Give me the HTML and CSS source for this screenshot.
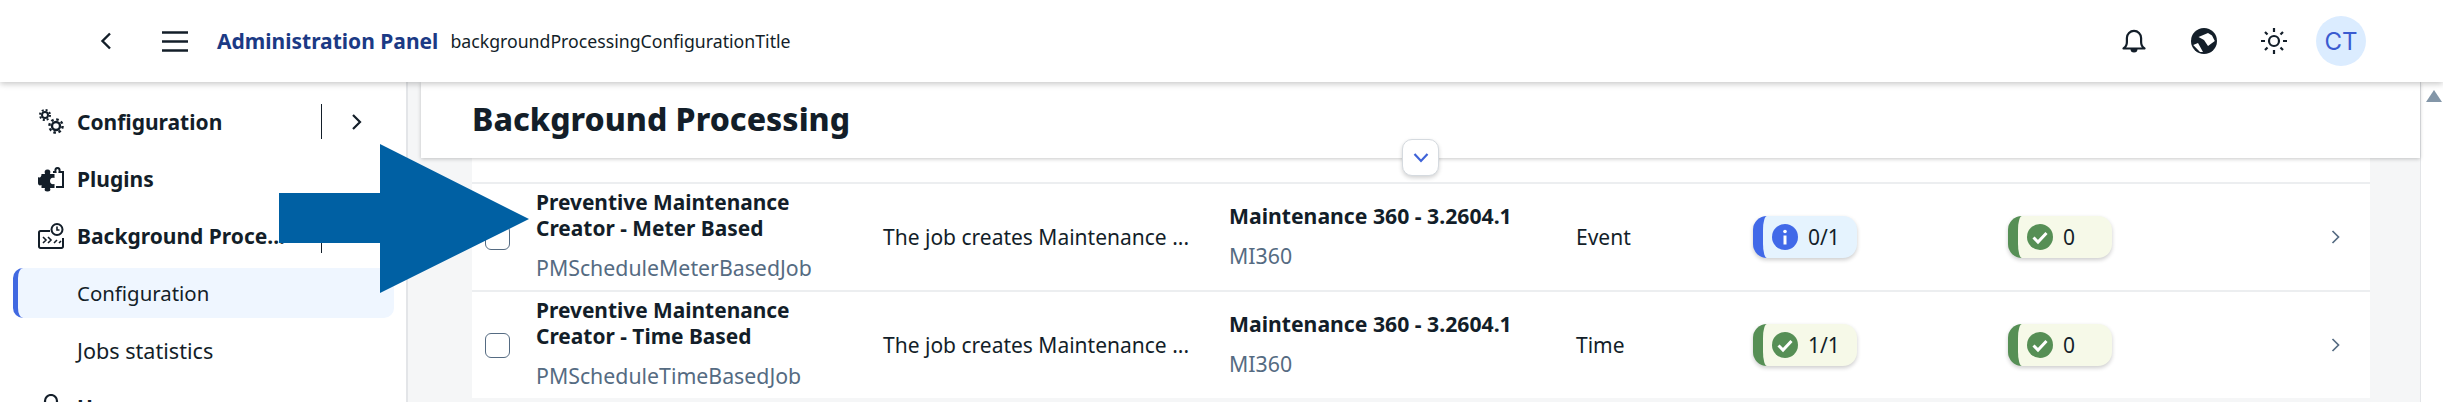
FILE: index.html
```html
<!DOCTYPE html>
<html lang="en">
<head>
    <meta charset="UTF-8">
    <meta name="viewport" content="width=device-width, initial-scale=1.0">
    <title>Administration Panel - Background Processing</title>
    <link rel="stylesheet" href="styles.css">
</head>
<body>

    <!-- Top bar -->
    <header class="topbar">
        <svg class="back-icon" width="12" height="18" viewBox="0 0 12 18"><path d="M10 1.500 2.500 9l7.500 7.500" fill="none" stroke="#131e29" stroke-width="2.400"/></svg>
        <svg class="menu-icon" width="26" height="21" viewBox="0 0 26 21"><path d="M0 1.500h26M0 10.500h26M0 19.500h26" stroke="#131e29" stroke-width="2.600"/></svg>
        <span class="app-title">Administration Panel</span>
        <span class="app-subtitle">backgroundProcessingConfigurationTitle</span>
        <div class="topbar-actions">
            <svg class="bell-icon" width="24" height="24" viewBox="0 0 24 24"><path d="M1.500 19.500c2.500-1.600 3.400-3.400 3.400-6.500V9a7.100 7.100 0 0 1 14.200 0v4c0 3.100.9 4.900 3.400 6.500z" fill="none" stroke="#131e29" stroke-width="2.200" stroke-linejoin="round"/><path d="M8.500 20h7a3.500 3.500 0 0 1-7 0z" fill="#131e29"/></svg>
            <svg class="globe-icon" width="26" height="26" viewBox="0 0 26 26"><circle cx="13" cy="13" r="13" fill="#131e29"/><path d="M7.500 9 17 5l4 2.500 2.800 5.500-6.800 5-4-6zM2.200 17l4.800-2 5 9h-3z" fill="#fff"/></svg>
            <svg class="sun-icon" width="26" height="26" viewBox="0 0 26 26"><circle cx="13" cy="13" r="5" fill="none" stroke="#131e29" stroke-width="2.200"/><path d="M13 0v4M13 22v4M0 13h4M22 13h4M4 4l2.500 2.500M19.500 19.500 22 22M4 22l2.500-2.500M19.500 6.500 22 4" stroke="#131e29" stroke-width="2.200"/></svg>
            <div class="avatar">CT</div>
        </div>
    </header>

    <div class="layout">
        <!-- Side navigation -->
        <nav class="sidebar">
            <div class="nav-item nav-parent">
                <svg class="nav-icon" width="26" height="26" viewBox="0 0 26 26"><g fill="none" stroke="#131e29"><circle cx="7" cy="6" r="3" stroke-width="2"/><circle cx="7" cy="6" r="5" stroke-width="2" stroke-dasharray="2 1.930"/><circle cx="18" cy="17" r="4" stroke-width="2.400"/><circle cx="18" cy="17" r="6.600" stroke-width="2.400" stroke-dasharray="2.600 2.580"/></g></svg>
                <span class="nav-label">Configuration</span>
                <span class="nav-divider"></span>
                <svg class="nav-chevron" width="11" height="16" viewBox="0 0 11 16"><path d="M2 1l7 7-7 7" fill="none" stroke="#131e29" stroke-width="2.200"/></svg>
            </div>
            <div class="nav-item nav-parent">
                <svg class="nav-icon" width="26" height="26" viewBox="0 0 26 26"><path d="M0 11c2 1.500 3.500 0 3.500-3H7C6 5 7 3.500 9.500 3.500S13 5 12 8h4.500v4c-3-1-4.500.5-4.500 3s1.500 3.500 4.500 3v4H12c1 2.500 0 3.500-2.500 3.500S6 24.500 7 22H3.500v-3c-2 1-3.500 0-3.500-2z" fill="#131e29"/><path d="M15 6h2.500c-.5-3 .5-4 2-4s2.500 1 2 4H25v15h-7" fill="none" stroke="#131e29" stroke-width="2"/></svg>
                <span class="nav-label">Plugins</span>
            </div>
            <div class="nav-item nav-parent">
                <svg class="nav-icon" width="26" height="26" viewBox="0 0 26 26"><g fill="none" stroke="#131e29" stroke-width="2"><path d="M12 8H2.500a1.500 1.500 0 0 0-1.500 1.500v14A1.500 1.500 0 0 0 2.500 25h21a1.500 1.500 0 0 0 1.500-1.500V15"/><circle cx="19" cy="6.500" r="5.500"/><path d="M19 3.500v3.500h2.500M5 14l3 3-3 3M10 14l3 3-3 3M16 20l3-3M21 20l2-2" stroke-width="1.600"/></g></svg>
                <span class="nav-label">Background Proce...</span>
                <span class="nav-divider"></span>
            </div>
            <div class="nav-item nav-child nav-active">
                <span class="nav-label">Configuration</span>
            </div>
            <div class="nav-item nav-child nav-jobs">
                <span class="nav-label">Jobs statistics</span>
            </div>
            <div class="nav-item nav-parent">
                <svg class="nav-icon" width="26" height="26" viewBox="0 0 26 26"><circle cx="13" cy="7" r="6" fill="none" stroke="#131e29" stroke-width="2.200"/></svg>
                <span class="nav-label">Users</span>
            </div>
        </nav>

        <!-- Main content -->
        <main class="content">
            <div class="page-head">
                <h1>Background Processing</h1>
                <button class="collapse-btn">
                    <svg width="16" height="10" viewBox="0 0 16 10"><path d="M1.500 1 8 8l6.500-7" fill="none" stroke="#3f63d8" stroke-width="2.200"/></svg>
                </button>
            </div>

            <div class="job-table">
                <div class="job-row">
                    <span class="check-box"></span>
                    <div class="job-name">
                        <div class="job-title">Preventive Maintenance Creator - Meter Based</div>
                        <div class="job-sub">PMScheduleMeterBasedJob</div>
                    </div>
                    <div class="job-desc">The job creates Maintenance ...</div>
                    <div class="job-app">
                        <div class="app-name">Maintenance 360 - 3.2604.1</div>
                        <div class="job-sub">MI360</div>
                    </div>
                    <div class="job-type">Event</div>
                    <div>
                        <span class="status status-info">
                            <svg width="26" height="26" viewBox="0 0 26 26"><circle cx="13" cy="13" r="13" fill="#4169e8"/><circle cx="13" cy="7.500" r="1.800" fill="#fff"/><path d="M13 11.500v9" stroke="#fff" stroke-width="3"/></svg>
                            0/1
                        </span>
                    </div>
                    <div>
                        <span class="status status-ok">
                            <svg width="26" height="26" viewBox="0 0 26 26"><circle cx="13" cy="13" r="13" fill="#568f55"/><path d="M6.500 13.500l4.500 4.500 8.500-9" fill="none" stroke="#fff" stroke-width="3"/></svg>
                            0
                        </span>
                    </div>
                    <svg class="row-chevron" width="9" height="14" viewBox="0 0 9 14"><path d="M1.500 1l6 6-6 6" fill="none" stroke="#556b82" stroke-width="1.700"/></svg>
                </div>

                <div class="job-row">
                    <span class="check-box"></span>
                    <div class="job-name">
                        <div class="job-title">Preventive Maintenance Creator - Time Based</div>
                        <div class="job-sub">PMScheduleTimeBasedJob</div>
                    </div>
                    <div class="job-desc">The job creates Maintenance ...</div>
                    <div class="job-app">
                        <div class="app-name">Maintenance 360 - 3.2604.1</div>
                        <div class="job-sub">MI360</div>
                    </div>
                    <div class="job-type">Time</div>
                    <div>
                        <span class="status status-ok">
                            <svg width="26" height="26" viewBox="0 0 26 26"><circle cx="13" cy="13" r="13" fill="#568f55"/><path d="M6.500 13.500l4.500 4.500 8.500-9" fill="none" stroke="#fff" stroke-width="3"/></svg>
                            1/1
                        </span>
                    </div>
                    <div>
                        <span class="status status-ok">
                            <svg width="26" height="26" viewBox="0 0 26 26"><circle cx="13" cy="13" r="13" fill="#568f55"/><path d="M6.500 13.500l4.500 4.500 8.500-9" fill="none" stroke="#fff" stroke-width="3"/></svg>
                            0
                        </span>
                    </div>
                    <svg class="row-chevron" width="9" height="14" viewBox="0 0 9 14"><path d="M1.500 1l6 6-6 6" fill="none" stroke="#556b82" stroke-width="1.700"/></svg>
                </div>
            </div>
        </main>

        <!-- Scrollbar -->
        <div class="scrollbar">
            <span class="scroll-up"></span>
        </div>
    </div>

    <!-- Annotation arrow drawn over the screenshot -->
    <svg class="callout-arrow" width="250" height="149" viewBox="0 0 250 149"><path d="M0 49H101V0L250 75 101 149V99H0z" fill="#0060a3"/></svg>

</body>
</html>
```

FILE: styles.css
```css
* {
    box-sizing: border-box;
}
html, body {
    height: 402px;
    overflow: hidden;
}
body {
    font-family: "Noto Sans", Arial, sans-serif;
    color: #131e29;
    background-color: #fff;
    margin: 0;
    position: relative;
}

/* top bar */
.topbar {
    height: 82px;
    display: flex;
    align-items: center;
    padding-left: 100px;
    background-color: #fff;
    box-shadow: 0 2px 6px rgba(0, 0, 0, 0.22);
    position: relative;
    z-index: 2;
}
.back-icon {
    margin-right: 50px;
}
.menu-icon {
    margin-right: 29px;
}
.app-title {
    font-size: 21px;
    font-weight: 700;
    color: #1b3a85;
    margin-right: 12px;
}
.app-subtitle {
    font-size: 17.700px;
}
.topbar-actions {
    margin-left: auto;
    margin-right: 77px;
    display: flex;
    align-items: center;
}
.bell-icon {
    margin-right: 45px;
}
.globe-icon {
    margin-right: 44px;
}
.sun-icon {
    margin-right: 29px;
}
.avatar {
    width: 50px;
    height: 50px;
    border-radius: 50%;
    background-color: #dbecff;
    color: #3a5bd0;
    font-family: Inter, sans-serif;
    font-size: 24px;
    display: flex;
    align-items: center;
    justify-content: center;
}

/* layout */
.layout {
    display: flex;
    height: 320px;
}

/* sidebar */
.sidebar {
    width: 408px;
    flex-shrink: 0;
    padding: 15px 12px 0 13px;
    background-color: #fff;
    border-right: 2px solid #e3e5e8;
    display: flex;
    flex-direction: column;
    gap: 7px;
}
.nav-item {
    height: 50px;
    flex-shrink: 0;
    display: flex;
    align-items: center;
    font-size: 21px;
    position: relative;
}
.nav-parent {
    padding-left: 25px;
    font-weight: 700;
}
.nav-child {
    padding-left: 64px;
}
.nav-active {
    background-color: #eff6ff;
    border-left: 5px solid #4169e1;
    padding-left: 59px;
    border-radius: 10px;
    font-size: 20.400px;
}
.nav-jobs {
    font-size: 21.600px;
}
.nav-icon {
    margin-right: 13px;
    flex-shrink: 0;
}
.nav-divider {
    width: 1px;
    height: 35px;
    background-color: #131e29;
    position: absolute;
    left: 308px;
    top: 7px;
}
.nav-chevron {
    position: absolute;
    left: 338px;
    top: 17px;
}

/* main */
.content {
    flex: 1;
    background-color: #f5f6f7;
    padding-left: 13px;
    min-width: 0;
}
.page-head {
    height: 76px;
    background-color: #fff;
    padding: 0 0 4px 51px;
    box-shadow: 0 1px 4px rgba(0, 0, 0, 0.22);
    display: flex;
    align-items: center;
    position: relative;
    z-index: 1;
}
.page-head h1 {
    font-size: 32px;
    font-weight: 800;
    margin: 0;
}
.collapse-btn {
    position: absolute;
    left: 981px;
    top: 57px;
    width: 37px;
    height: 37px;
    padding: 0;
    background-color: #fff;
    border: 1px solid #d5dadf;
    border-radius: 10px;
    box-shadow: 0 2px 4px rgba(0, 0, 0, 0.18);
    display: flex;
    align-items: center;
    justify-content: center;
}
.job-table {
    margin-left: 51px;
    width: 1898px;
    padding-top: 24px;
    background-color: #fff;
}
.job-row {
    height: 108px;
    display: grid;
    grid-template-columns: 64px 347px 346px 347px 177px 255px 323px 9px;
    align-items: center;
    border-top: 2px solid #eceef0;
}
.check-box {
    width: 25px;
    height: 25px;
    margin-left: 13px;
    border: 1.500px solid #556b82;
    border-radius: 6px;
    background-color: #fff;
}
.job-name {
    padding-bottom: 4px;
}
.job-title {
    font-size: 20.900px;
    font-weight: 700;
    line-height: 26px;
    width: 300px;
}
.job-sub {
    font-size: 21.300px;
    color: #556b82;
    line-height: 26px;
    margin-top: 14px;
}
.job-desc {
    font-size: 21px;
    white-space: nowrap;
}
.job-app {
    padding-bottom: 2px;
}
.app-name {
    font-size: 21.200px;
    font-weight: 700;
    line-height: 26px;
}
.job-type {
    font-size: 21px;
}

/* status chips */
.status {
    width: 104px;
    height: 42px;
    display: flex;
    align-items: center;
    gap: 10px;
    padding-left: 9px;
    border-left: 10px solid;
    border-radius: 14px;
    font-size: 21px;
    box-shadow: 0 2px 4px rgba(0, 0, 0, 0.2);
}
.status-info {
    background-color: #e5f3fe;
    border-left-color: #4169e8;
}
.status-ok {
    background-color: #f6f9e8;
    border-left-color: #568f55;
}

/* scrollbar */
.scrollbar {
    width: 23px;
    flex-shrink: 0;
    background-color: #fff;
    border-left: 1px solid #e3e5e8;
    padding: 8px 0 0 5px;
}
.scroll-up {
    display: block;
    width: 0;
    height: 0;
    border-left: 8px solid transparent;
    border-right: 8px solid transparent;
    border-bottom: 12px solid #8396a8;
}

/* annotation */
.callout-arrow {
    position: absolute;
    left: 279px;
    top: 144px;
    z-index: 3;
}
```
